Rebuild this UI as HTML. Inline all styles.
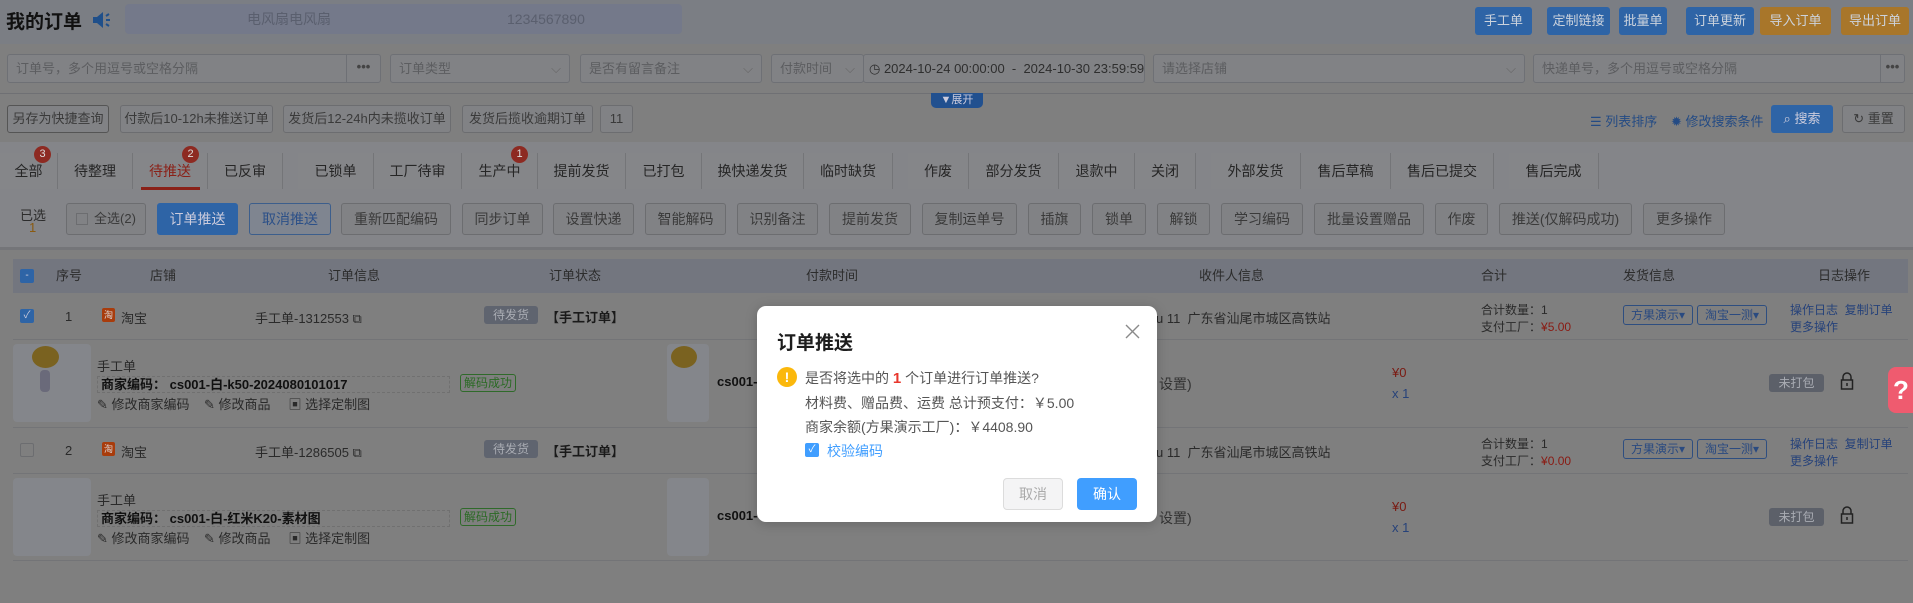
<!DOCTYPE html>
<html><head><meta charset="utf-8"><style>
*{box-sizing:border-box;margin:0;padding:0}
body{width:1913px;height:603px;overflow:hidden;background:#7f7f7f;font-family:"Liberation Sans","Noto Sans CJK SC",sans-serif;font-size:13px;color:#2a2a2a;position:relative}
.a{position:absolute}
.btn{position:absolute;height:28px;line-height:26px;border:1px solid #6c6d70;background:#818285;border-radius:3px;text-align:center;color:#3a3a3a;font-size:13px;white-space:nowrap}
.inp{position:absolute;top:54px;height:29px;border:1px solid #6e7075;background:#818285;border-radius:3px;color:#5c5d60;line-height:27px;padding-left:8px;font-size:13px;white-space:nowrap}
.tb{position:absolute;top:153px;height:36px;line-height:36px;text-align:center;font-size:14px;color:#262626;border-right:1px solid #747578}
.grp{position:absolute;top:153px;height:36px;background:#858689}
.badge{position:absolute;top:146px;width:17px;height:17px;border-radius:50%;background:#8d2a22;color:#ddd;font-size:11px;line-height:17px;text-align:center}
.hb{position:absolute;color:#ccd3dd;border-radius:3px;top:7px;height:28px;line-height:28px;text-align:center;font-size:13px}
.th{position:absolute;top:259px;height:34px;line-height:34px;color:#2c2c2c;font-size:13px}
.tag{position:absolute;border-radius:3px;font-size:12px;text-align:center}
.lnk{color:#26427a}
</style></head><body>
<div class="a" style="left:0;top:0;width:1913px;height:44px;background:#7b7e84"></div>
<div class="a" style="left:6px;top:7px;font-size:19px;font-weight:bold;color:#111">我的订单</div>
<svg class="a" style="left:91px;top:10px" width="22" height="20" viewBox="0 0 22 20"><path d="M2 7h4l6-5v16l-6-5H2z" fill="#1f4f8a"/><path d="M15 6l3-2M15 10h4M15 14l3 2" stroke="#1f4f8a" stroke-width="2"/></svg>
<div class="a" style="left:125px;top:4px;width:557px;height:30px;background:#74798a;border-radius:4px;color:#5a5f6e;font-size:14px;line-height:30px"><span class="a" style="left:122px">电风扇电风扇</span><span class="a" style="left:382px">1234567890</span></div>
<div class="hb" style="left:1475px;width:57px;background:#2e64a6">手工单</div>
<div class="hb" style="left:1547px;width:63px;background:#2e64a6">定制链接</div>
<div class="hb" style="left:1619px;width:48px;background:#2e64a6">批量单</div>
<div class="hb" style="left:1686px;width:68px;background:#2e64a6">订单更新</div>
<div class="hb" style="left:1760px;width:71px;background:#a8762a">导入订单</div>
<div class="hb" style="left:1841px;width:68px;background:#a8762a">导出订单</div>
<div class="inp" style="left:7px;width:374px">订单号，多个用逗号或空格分隔</div>
<div class="a" style="left:346px;top:55px;width:34px;height:27px;border-left:1px solid #6e7075;text-align:center;line-height:24px;font-weight:bold;color:#444">•••</div>
<div class="inp" style="left:390px;width:180px">订单类型<span class="a" style="right:8px;color:#666">⌵</span></div>
<div class="inp" style="left:580px;width:182px">是否有留言备注<span class="a" style="right:8px;color:#666">⌵</span></div>
<div class="inp" style="left:771px;width:93px">付款时间<span class="a" style="right:8px;color:#666">⌵</span></div>
<div class="inp" style="left:863px;width:282px;color:#2e2e2e;padding-left:5px">◷ 2024-10-24 00:00:00 &nbsp;- &nbsp;2024-10-30 23:59:59</div>
<div class="inp" style="left:1153px;width:372px">请选择店铺<span class="a" style="right:8px;color:#666">⌵</span></div>
<div class="inp" style="left:1533px;width:372px">快递单号，多个用逗号或空格分隔</div>
<div class="a" style="left:1880px;top:55px;width:24px;height:27px;border-left:1px solid #6e7075;text-align:center;line-height:24px;font-weight:bold;color:#444">•••</div>
<div class="a" style="left:0;top:93px;width:1913px;height:1px;background:#6f7074"></div>
<div class="a" style="left:931px;top:93px;width:52px;height:15px;background:#21508f;color:#ccd;border-radius:0 0 5px 5px;font-size:11px;line-height:15px;text-align:center">▼展开</div>
<div class="btn" style="left:7px;top:105px;width:102px;border-color:#555">另存为快捷查询</div>
<div class="btn" style="left:120px;top:105px;width:153px">付款后10-12h未推送订单</div>
<div class="btn" style="left:283px;top:105px;width:168px">发货后12-24h内未揽收订单</div>
<div class="btn" style="left:462px;top:105px;width:131px">发货后揽收逾期订单</div>
<div class="btn" style="left:600px;top:105px;width:33px">11</div>
<div class="a lnk" style="left:1590px;top:111px;font-size:13px;color:#244b84">☰ 列表排序</div>
<div class="a lnk" style="left:1671px;top:111px;font-size:13px;color:#244b84">✹ 修改搜索条件</div>
<div class="a" style="left:1771px;top:105px;width:62px;height:28px;background:#2e64a6;border-radius:3px;color:#ccd;line-height:28px;text-align:center">⌕ 搜索</div>
<div class="btn" style="left:1842px;top:105px;width:63px">↻ 重置</div>
<div class="a" style="left:0;top:142px;width:1913px;height:106px;background:#848589"></div>
<div class="grp" style="left:0;width:283px"></div><div class="grp" style="left:298px;width:595px"></div><div class="grp" style="left:908px;width:288px"></div><div class="grp" style="left:1211px;width:283px"></div><div class="grp" style="left:1509px;width:90px"></div>
<div class="tb" style="left:0;width:58px">全部</div><div class="tb" style="left:58px;width:75px">待整理</div><div class="tb" style="left:133px;width:75px;color:#8a2118">待推送</div><div class="tb" style="left:208px;width:75px">已反审</div>
<div class="tb" style="left:298px;width:76px">已锁单</div><div class="tb" style="left:374px;width:88px">工厂待审</div><div class="tb" style="left:462px;width:76px">生产中</div><div class="tb" style="left:538px;width:88px">提前发货</div><div class="tb" style="left:626px;width:76px">已打包</div><div class="tb" style="left:702px;width:102px">换快递发货</div><div class="tb" style="left:804px;width:89px">临时缺货</div>
<div class="tb" style="left:908px;width:61px">作废</div><div class="tb" style="left:969px;width:90px">部分发货</div><div class="tb" style="left:1059px;width:76px">退款中</div><div class="tb" style="left:1135px;width:61px">关闭</div>
<div class="tb" style="left:1211px;width:90px">外部发货</div><div class="tb" style="left:1301px;width:90px">售后草稿</div><div class="tb" style="left:1391px;width:103px">售后已提交</div>
<div class="tb" style="left:1509px;width:90px">售后完成</div>
<div class="a" style="left:141px;top:187px;width:59px;height:3px;background:#8a2118"></div>
<div class="badge" style="left:34px">3</div><div class="badge" style="left:182px">2</div><div class="badge" style="left:511px">1</div>
<div class="a" style="left:20px;top:205px;font-size:13px;color:#2c2c2c">已选</div>
<div class="a" style="left:29px;top:220px;font-size:13px;color:#8a5a10">1</div>
<div class="btn" style="left:66px;top:203px;width:80px;height:32px;line-height:30px"><span style="display:inline-block;width:12px;height:12px;border:1px solid #6c6d70;vertical-align:-2px;margin-right:6px"></span>全选(2)</div>
<div class="btn" style="left:157px;top:203px;width:81px;height:32px;line-height:30px;background:#2e64a6;border-color:#2e64a6;color:#ccd;font-size:14px">订单推送</div>
<div class="btn" style="left:249px;top:203px;width:82px;height:32px;line-height:30px;background:#7f8590;border-color:#3c5e8c;color:#2c5088;font-size:14px">取消推送</div>
<div class="btn" style="left:341px;top:203px;width:110px;height:32px;line-height:30px;font-size:14px">重新匹配编码</div>
<div class="btn" style="left:462px;top:203px;width:81px;height:32px;line-height:30px;font-size:14px">同步订单</div>
<div class="btn" style="left:553px;top:203px;width:81px;height:32px;line-height:30px;font-size:14px">设置快递</div>
<div class="btn" style="left:645px;top:203px;width:81px;height:32px;line-height:30px;font-size:14px">智能解码</div>
<div class="btn" style="left:737px;top:203px;width:81px;height:32px;line-height:30px;font-size:14px">识别备注</div>
<div class="btn" style="left:829px;top:203px;width:82px;height:32px;line-height:30px;font-size:14px">提前发货</div>
<div class="btn" style="left:922px;top:203px;width:95px;height:32px;line-height:30px;font-size:14px">复制运单号</div>
<div class="btn" style="left:1028px;top:203px;width:53px;height:32px;line-height:30px;font-size:14px">插旗</div>
<div class="btn" style="left:1092px;top:203px;width:54px;height:32px;line-height:30px;font-size:14px">锁单</div>
<div class="btn" style="left:1157px;top:203px;width:53px;height:32px;line-height:30px;font-size:14px">解锁</div>
<div class="btn" style="left:1221px;top:203px;width:82px;height:32px;line-height:30px;font-size:14px">学习编码</div>
<div class="btn" style="left:1314px;top:203px;width:110px;height:32px;line-height:30px;font-size:14px">批量设置赠品</div>
<div class="btn" style="left:1435px;top:203px;width:53px;height:32px;line-height:30px;font-size:14px">作废</div>
<div class="btn" style="left:1499px;top:203px;width:133px;height:32px;line-height:30px;font-size:14px">推送(仅解码成功)</div>
<div class="btn" style="left:1643px;top:203px;width:82px;height:32px;line-height:30px;font-size:14px">更多操作</div>
<div class="a" style="left:0;top:247px;width:1913px;height:3px;background:#747579"></div>
<div class="a" style="left:13px;top:259px;width:1895px;height:34px;background:#73767f"></div>
<div class="a" style="left:20px;top:269px;width:14px;height:14px;background:#2e64a6;border-radius:2px;color:#ccd;font-size:10px;line-height:13px;text-align:center">-</div>
<div class="th" style="left:56px">序号</div><div class="th" style="left:150px">店铺</div><div class="th" style="left:328px">订单信息</div><div class="th" style="left:549px">订单状态</div><div class="th" style="left:806px">付款时间</div><div class="th" style="left:1199px">收件人信息</div><div class="th" style="left:1481px">合计</div><div class="th" style="left:1623px">发货信息</div><div class="th" style="left:1818px">日志操作</div>
<div class="a" style="left:13px;top:339px;width:1895px;height:1px;background:#737477"></div>
<div class="a" style="left:13px;top:427px;width:1895px;height:1px;background:#737477"></div>
<div class="a" style="left:13px;top:473px;width:1895px;height:1px;background:#737477"></div>
<div class="a" style="left:13px;top:560px;width:1895px;height:1px;background:#737477"></div>
<div class="a" style="left:20px;top:309px;width:14px;height:14px;background:#2e64a6;border-radius:2px;color:#ccd;font-size:10px;line-height:14px;text-align:center">✓</div>
<div class="a" style="left:65px;top:309px">1</div>
<div class="a" style="left:102px;top:308px;width:13px;height:14px;background:#a83c0c;border-radius:2px;color:#ddd;font-size:9px;text-align:center;line-height:14px">淘</div>
<div class="a" style="left:121px;top:308px">淘宝</div>
<div class="a" style="left:255px;top:308px">手工单-1312553 ⧉</div>
<div class="tag" style="left:484px;top:306px;width:54px;height:18px;line-height:18px;background:#5f646f;color:#a9acb3">待发货</div>
<div class="a" style="left:546px;top:307px;font-weight:bold;color:#1a1a1a">【手工订单】</div>
<div class="a" style="left:1156px;top:308px">u 11 &nbsp;广东省汕尾市城区高铁站</div>
<div class="a" style="left:1481px;top:301px;font-size:12px">合计数量：1</div>
<div class="a" style="left:1481px;top:318px;font-size:12px">支付工厂：<span style="color:#8a1a12">¥5.00</span></div>
<div class="tag" style="left:1623px;top:305px;width:70px;height:20px;line-height:18px;border:1px solid #2e4e80;color:#2a4a80">方果演示▾</div>
<div class="tag" style="left:1697px;top:305px;width:70px;height:20px;line-height:18px;border:1px solid #2e4e80;color:#2a4a80">淘宝一测▾</div>
<div class="a lnk" style="left:1790px;top:301px;font-size:12px">操作日志 &nbsp;复制订单</div>
<div class="a lnk" style="left:1790px;top:318px;font-size:12px">更多操作</div>
<div class="a" style="left:13px;top:344px;width:78px;height:78px;background:#84868b;border-radius:4px"></div>
<div class="a" style="left:32px;top:346px;width:27px;height:22px;border-radius:50%;background:#7a6220"></div>
<div class="a" style="left:40px;top:370px;width:10px;height:22px;background:#6a6a7a;border-radius:4px"></div>
<div class="a" style="left:667px;top:344px;width:42px;height:78px;background:#84868b;border-radius:4px"></div>
<div class="a" style="left:671px;top:346px;width:26px;height:22px;border-radius:50%;background:#7a6220"></div>
<div class="a" style="left:97px;top:356px">手工单</div>
<div class="a" style="left:97px;top:376px;width:353px;height:17px;border:1px dashed #707070;font-weight:bold;line-height:15px;padding-left:3px;color:#111">商家编码： cs001-白-k50-2024080101017</div>
<div class="tag" style="left:460px;top:374px;width:56px;height:18px;line-height:16px;border:1px solid #2f6a2a;color:#2a6a24">解码成功</div>
<div class="a" style="left:97px;top:394px;font-size:13px">✎ 修改商家编码 &nbsp;&nbsp;&nbsp;✎ 修改商品 &nbsp;&nbsp;&nbsp;&nbsp;▣ 选择定制图</div>
<div class="a" style="left:717px;top:374px;font-weight:bold;color:#111">cs001-</div>
<div class="a" style="left:1392px;top:365px;color:#7a1a12">¥0</div>
<div class="a" style="left:1392px;top:386px;color:#26427a">x 1</div>
<div class="tag" style="left:1769px;top:374px;width:55px;height:18px;line-height:18px;background:#5c6069;color:#a9acb3">未打包</div>
<svg class="a" style="left:1840px;top:372px" width="14" height="18" viewBox="0 0 14 18"><path d="M3 8V5a4 4 0 0 1 8 0v3" fill="none" stroke="#222" stroke-width="1.5"/><rect x="1.5" y="8" width="11" height="9" fill="none" stroke="#222" stroke-width="1.5"/><path d="M7 11v3" stroke="#222" stroke-width="1.5"/></svg>
<div class="a" style="left:20px;top:443px;width:14px;height:14px;border:1px solid #6c6d70;border-radius:2px"></div>
<div class="a" style="left:65px;top:443px">2</div>
<div class="a" style="left:102px;top:442px;width:13px;height:14px;background:#a83c0c;border-radius:2px;color:#ddd;font-size:9px;text-align:center;line-height:14px">淘</div>
<div class="a" style="left:121px;top:442px">淘宝</div>
<div class="a" style="left:255px;top:442px">手工单-1286505 ⧉</div>
<div class="tag" style="left:484px;top:440px;width:54px;height:18px;line-height:18px;background:#5f646f;color:#a9acb3">待发货</div>
<div class="a" style="left:546px;top:441px;font-weight:bold;color:#1a1a1a">【手工订单】</div>
<div class="a" style="left:1156px;top:442px">u 11 &nbsp;广东省汕尾市城区高铁站</div>
<div class="a" style="left:1481px;top:435px;font-size:12px">合计数量：1</div>
<div class="a" style="left:1481px;top:452px;font-size:12px">支付工厂：<span style="color:#8a1a12">¥0.00</span></div>
<div class="tag" style="left:1623px;top:439px;width:70px;height:20px;line-height:18px;border:1px solid #2e4e80;color:#2a4a80">方果演示▾</div>
<div class="tag" style="left:1697px;top:439px;width:70px;height:20px;line-height:18px;border:1px solid #2e4e80;color:#2a4a80">淘宝一测▾</div>
<div class="a lnk" style="left:1790px;top:435px;font-size:12px">操作日志 &nbsp;复制订单</div>
<div class="a lnk" style="left:1790px;top:452px;font-size:12px">更多操作</div>
<div class="a" style="left:13px;top:478px;width:78px;height:78px;background:#84868b;border-radius:4px"></div>
<div class="a" style="left:667px;top:478px;width:42px;height:78px;background:#84868b;border-radius:4px"></div>
<div class="a" style="left:97px;top:490px">手工单</div>
<div class="a" style="left:97px;top:510px;width:353px;height:17px;border:1px dashed #707070;font-weight:bold;line-height:15px;padding-left:3px;color:#111">商家编码： cs001-白-红米K20-素材图</div>
<div class="tag" style="left:460px;top:508px;width:56px;height:18px;line-height:16px;border:1px solid #2f6a2a;color:#2a6a24">解码成功</div>
<div class="a" style="left:97px;top:528px;font-size:13px">✎ 修改商家编码 &nbsp;&nbsp;&nbsp;✎ 修改商品 &nbsp;&nbsp;&nbsp;&nbsp;▣ 选择定制图</div>
<div class="a" style="left:717px;top:508px;font-weight:bold;color:#111">cs001-</div>
<div class="a" style="left:1392px;top:499px;color:#7a1a12">¥0</div>
<div class="a" style="left:1392px;top:520px;color:#26427a">x 1</div>
<div class="tag" style="left:1769px;top:508px;width:55px;height:18px;line-height:18px;background:#5c6069;color:#a9acb3">未打包</div>
<svg class="a" style="left:1840px;top:506px" width="14" height="18" viewBox="0 0 14 18"><path d="M3 8V5a4 4 0 0 1 8 0v3" fill="none" stroke="#222" stroke-width="1.5"/><rect x="1.5" y="8" width="11" height="9" fill="none" stroke="#222" stroke-width="1.5"/><path d="M7 11v3" stroke="#222" stroke-width="1.5"/></svg>
<div class="a" style="left:1159px;top:374px;color:#333;font-size:14px">设置)</div>
<div class="a" style="left:1159px;top:508px;color:#333;font-size:14px">设置)</div>
<div class="a" style="left:1888px;top:367px;width:30px;height:46px;background:#ef5b6f;border-radius:8px 0 0 8px;color:#fff;font-size:26px;font-weight:bold;line-height:46px;padding-left:5px">?</div>
<div class="a" style="left:757px;top:306px;width:400px;height:216px;background:#fff;border-radius:9px;box-shadow:0 2px 12px rgba(0,0,0,.2)">
<div class="a" style="left:20px;top:22px;font-size:19px;font-weight:bold;color:#1d1d1d">订单推送</div>
<svg class="a" style="left:367px;top:17px" width="17" height="17" viewBox="0 0 17 17"><path d="M2 2L15 15M15 2L2 15" stroke="#8a8a8a" stroke-width="1.4"/></svg>
<div class="a" style="left:20px;top:61px;width:20px;height:20px;border-radius:50%;background:#fbb80c;color:#fff;font-weight:bold;font-size:14px;text-align:center;line-height:20px">!</div>
<div class="a" style="left:48px;top:62px;font-size:14px;color:#555">是否将选中的 <b style="color:#e8372c;font-size:15px">1</b> 个订单进行订单推送?</div>
<div class="a" style="left:48px;top:87px;font-size:14px;color:#555">材料费、赠品费、运费 总计预支付：￥5.00</div>
<div class="a" style="left:48px;top:111px;font-size:14px;color:#555">商家余额(方果演示工厂)：￥4408.90</div>
<div class="a" style="left:48px;top:137px;width:14px;height:14px;background:#409eff;border-radius:2px;color:#fff;font-size:10px;text-align:center;line-height:14px">✓</div>
<div class="a" style="left:70px;top:135px;font-size:14px;color:#409eff">校验编码</div>
<div class="a" style="left:246px;top:172px;width:60px;height:32px;border:1px solid #dcdcdc;background:#f4f4f5;border-radius:4px;color:#aaa;text-align:center;line-height:30px;font-size:14px">取消</div>
<div class="a" style="left:320px;top:172px;width:60px;height:32px;background:#409eff;border-radius:4px;color:#fff;text-align:center;line-height:32px;font-size:14px">确认</div>
</div>
</body></html>
